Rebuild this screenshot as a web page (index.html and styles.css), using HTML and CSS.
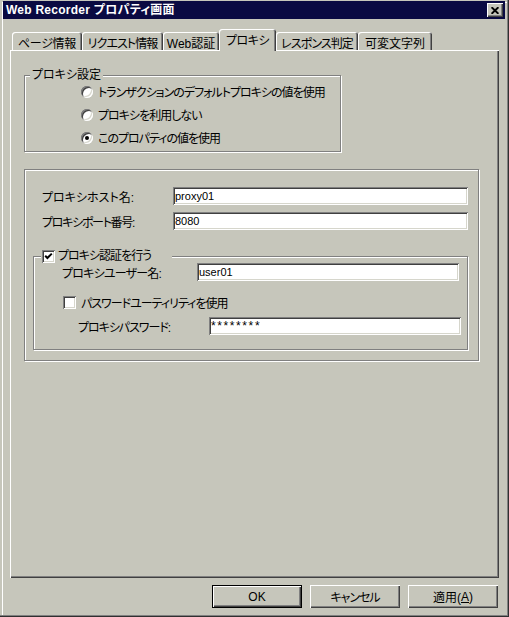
FILE: index.html
```html
<!DOCTYPE html>
<html lang="ja">
<head>
<meta charset="utf-8">
<title>Web Recorder プロパティ画面</title>
<link rel="stylesheet" href="styles.css">
</head>
<body>
<div class="window">
  <div class="titlebar">
    <span class="title">Web Recorder プロパティ画面</span>
    <span class="close-btn"><svg width="8" height="7" viewBox="0 0 8 7"><path d="M0.6 0.2 L7.4 6.8 M7.4 0.2 L0.6 6.8" stroke="#000" stroke-width="1.9" fill="none"/></svg></span>
  </div>

  <div class="tabs">
    <div class="tab tab-page">ページ情報</div>
    <div class="tab tab-req">リクエスト情報</div>
    <div class="tab tab-web">Web認証</div>
    <div class="tab tab-proxy active">プロキシ</div>
    <div class="tab tab-resp">レスポンス判定</div>
    <div class="tab tab-var">可変文字列</div>
  </div>

  <div class="panel">
    <div class="group group-proxy">
      <div class="legend legend-proxy">プロキシ設定</div>
      <div class="radios">
        <div class="radio-row"><span class="radio"></span><span class="tight">トランザクションのデフォルトプロキシの値を使用</span></div>
        <div class="radio-row"><span class="radio"></span><span class="tight">プロキシを利用しない</span></div>
        <div class="radio-row"><span class="radio checked"></span><span class="tight">このプロパティの値を使用</span></div>
      </div>
    </div>

    <div class="frame">
      <div class="field-row host-row"><span class="field-label">プロキシホスト名:</span><span class="input input-wide">proxy01</span></div>
      <div class="field-row host-row port-row"><span class="field-label label-port">プロキシポート番号:</span><span class="input input-wide">8080</span></div>

      <div class="group group-auth">
        <div class="legend legend-check"><span class="checkbox"><svg width="9" height="9" viewBox="0 0 9 9"><polyline points="1.2,3.8 3.4,6 7.8,1.6" stroke="#000" stroke-width="2" fill="none"/></svg></span><span class="tight">プロキシ認証を行う</span></div>
        <div class="field-row user-row"><span class="field-label label-user">プロキシユーザー名:</span><span class="input input-user">user01</span></div>
        <div class="check-row"><span class="checkbox"></span><span class="tight">パスワードユーティリティを使用</span></div>
        <div class="field-row pass-row"><span class="field-label label-pass">プロキシパスワード:</span><span class="input input-pass">********</span></div>
      </div>
    </div>
  </div>

  <div class="buttons">
    <div class="btn btn-default">OK</div>
    <div class="btn tight">キャンセル</div>
    <div class="btn">適用(<u>A</u>)</div>
  </div>
</div>
</body>
</html>
```
FILE: styles.css
```css
* { box-sizing: border-box; }

html, body {
  margin: 0;
  padding: 0;
}

body {
  width: 509px;
  height: 617px;
  overflow: hidden;
  background: #c6c6bb;
  font-family: "Liberation Sans", "Noto Sans CJK JP", sans-serif;
  font-size: 12px;
  color: #000;
  font-feature-settings: "palt";
}

.tight { letter-spacing: -1px; }

.window {
  width: 509px;
  height: 617px;
  padding: 1px 4px 3px 3px;
  background: #c6c6bb;
  display: flex;
  flex-direction: column;
  box-shadow: inset -1px -1px #303030, inset -2px -2px #808080, inset 2px 2px #c6c6bb, inset 3px 3px #ffffff;
}

/* title bar */
.titlebar {
  height: 18px;
  flex: none;
  background: #0a0a42;
  display: flex;
  align-items: center;
  justify-content: space-between;
  padding: 0 2px 0 3px;
}

.title {
  color: #fff;
  font-weight: bold;
  font-size: 12px;
  line-height: 18px;
  letter-spacing: 0.25px;
  white-space: nowrap;
}

.close-btn {
  width: 16px;
  height: 14px;
  background: #c6c6bb;
  display: flex;
  align-items: center;
  justify-content: center;
  box-shadow: inset 1px 1px #ffffff, inset -1px -1px #404040, inset -2px -2px #808080;
}

/* tabs */
.tabs {
  display: flex;
  align-items: flex-end;
  height: 21px;
  flex: none;
  margin-top: 10px;
  padding-left: 9px;
  position: relative;
  z-index: 1;
}

.tab {
  height: 18px;
  display: flex;
  align-items: center;
  justify-content: center;
  padding-top: 2px;
  white-space: nowrap;
  background: #c6c6bb;
  border-radius: 3px 3px 0 0;
  box-shadow: inset 1px 1px #ffffff, inset -1px 0 #404040, inset -2px 0 #808080;
}

.tab-page { width: 70px; letter-spacing: -0.3px; }
.tab-req { width: 81px; letter-spacing: -0.9px; }
.tab-web { width: 56px; }
.tab-proxy { width: 57px; letter-spacing: -0.5px; }
.tab-resp { width: 82px; letter-spacing: -0.9px; }
.tab-var { width: 74px; }

.tab.active {
  height: 22px;
  margin-bottom: -1px;
  padding-top: 0;
  padding-bottom: 2px;
}

/* panel */
.panel {
  flex: none;
  margin-left: 7px;
  width: 489px;
  height: 528px;
  padding: 25px 0 0 14px;
  box-shadow: inset 1px 1px #ffffff, inset -1px -1px #404040, inset -2px -2px #808080;
}

.group {
  border: 1px solid #808080;
  box-shadow: inset 1px 1px #ffffff, 1px 1px #ffffff;
}

.group-proxy {
  width: 317px;
  height: 77px;
}

.legend {
  width: fit-content;
  height: 14px;
  line-height: 14px;
  margin-top: -8px;
  background: #c6c6bb;
  white-space: nowrap;
}

.legend-proxy {
  margin-left: 5px;
  padding: 0 2px;
}

.radios {
  margin: -2px 0 0 56px;
}

.radio-row {
  display: flex;
  align-items: center;
  gap: 5px;
  height: 23px;
  white-space: nowrap;
}

.radio {
  flex: none;
  width: 12px;
  height: 12px;
  border-radius: 50%;
  background: #fff;
  display: flex;
  align-items: center;
  justify-content: center;
  box-shadow: inset 1px 1px #808080, inset -1px -1px #ffffff, inset 2px 2px #404040, inset -2px -2px #d6d6cc;
}

.radio.checked::after {
  content: "";
  width: 4px;
  height: 4px;
  border-radius: 50%;
  background: #000;
}

/* frame */
.frame {
  width: 455px;
  height: 192px;
  margin-top: 17px;
  padding: 17px 0 0 8px;
  border: 1px solid #808080;
  box-shadow: inset 1px 1px #ffffff, 1px 1px #ffffff;
}

.field-row {
  display: flex;
  align-items: center;
  white-space: nowrap;
}

.host-row { margin-left: 9px; }
.port-row { margin-top: 7px; }

.field-label { flex: none; width: 131px; }
.label-port { letter-spacing: -1.3px; }

.input {
  flex: none;
  height: 18px;
  background: #fff;
  padding: 2px 0 0 2px;
  font-size: 11px;
  line-height: 14px;
  letter-spacing: 0;
  box-shadow: inset 1px 1px #808080, inset -1px -1px #ffffff, inset 2px 2px #404040, inset -2px -2px #d6d6cc;
}

.input-wide { width: 295px; }

/* auth group */
.group-auth {
  width: 435px;
  height: 94px;
  margin-top: 26px;
}

.legend-check {
  margin-left: 7px;
  padding-left: 1px;
  width: 131px;
  display: flex;
  align-items: center;
  gap: 3px;
}

.checkbox {
  flex: none;
  width: 13px;
  height: 13px;
  background: #fff;
  display: flex;
  align-items: center;
  justify-content: center;
  box-shadow: inset 1px 1px #808080, inset -1px -1px #ffffff, inset 2px 2px #404040, inset -2px -2px #d6d6cc;
}

.user-row { margin-left: 28px; }
.label-user { width: 135px; letter-spacing: -0.8px; }
.input-user { width: 262px; }

.check-row {
  display: flex;
  align-items: center;
  gap: 5px;
  height: 13px;
  margin: 15px 0 0 29px;
  white-space: nowrap;
}

.pass-row { margin: 8px 0 0 44px; }
.label-pass { width: 131px; letter-spacing: -1px; }
.input-pass { width: 252px; letter-spacing: 1.6px; font-size: 12px; }

/* buttons */
.buttons {
  display: flex;
  justify-content: flex-end;
  gap: 8px;
  margin-top: 7px;
  padding-right: 7px;
}

.btn {
  width: 90px;
  height: 23px;
  display: flex;
  align-items: center;
  justify-content: center;
  white-space: nowrap;
  box-shadow: inset 1px 1px #ffffff, inset -1px -1px #404040, inset -2px -2px #808080;
}

.btn-default {
  box-shadow: inset 0 0 0 1px #000000, inset 2px 2px #ffffff, inset -2px -2px #404040, inset -3px -3px #808080;
}

.btn u { text-decoration: underline; }
```
